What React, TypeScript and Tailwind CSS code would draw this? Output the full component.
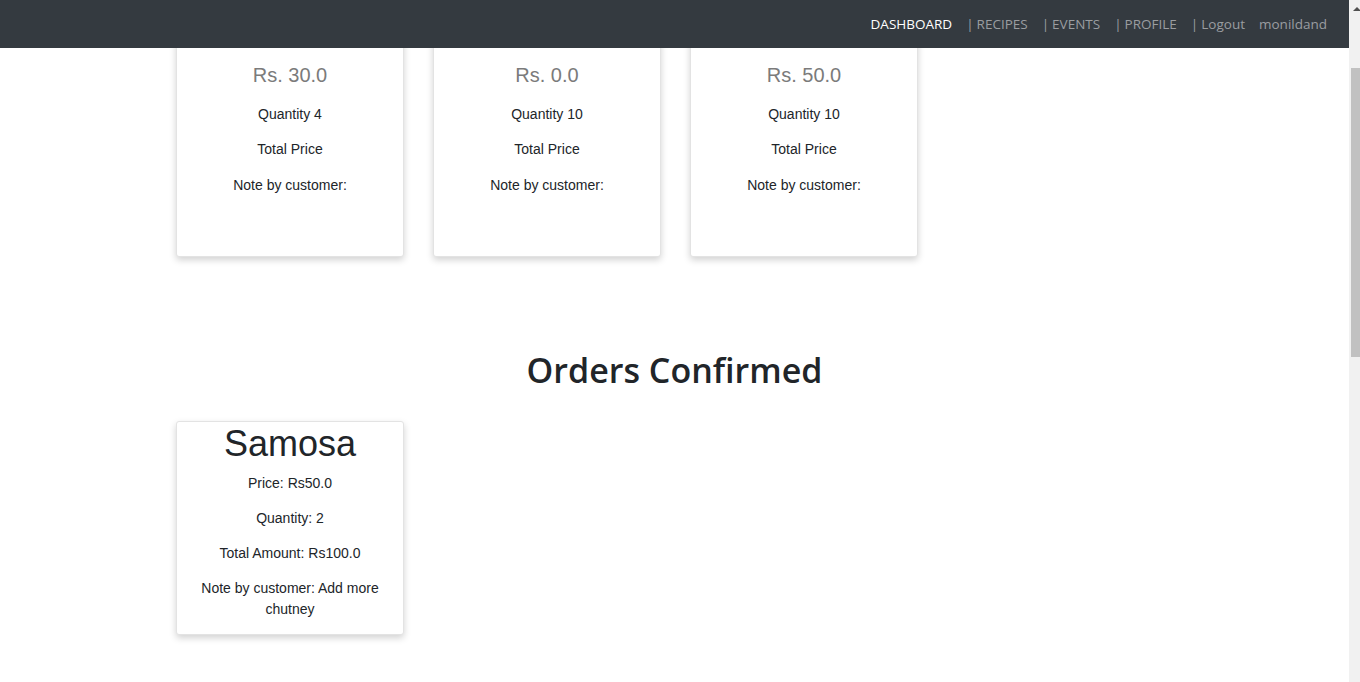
import React from 'react'

interface PendingOrder {
  id: number
  price: string
  quantity: number
}

const pending: PendingOrder[] = [
  { id: 1, price: 'Rs. 30.0', quantity: 4 },
  { id: 2, price: 'Rs. 0.0', quantity: 10 },
  { id: 3, price: 'Rs. 50.0', quantity: 10 },
]

const navLinks = ['RECIPES', 'EVENTS', 'PROFILE', 'Logout']

function Navbar() {
  return (
    <nav className="absolute top-0 left-0 right-0 z-10 h-[48px] bg-[#343a40] flex items-center justify-end pr-[15px] font-['Open_Sans',sans-serif] text-[13.5px]">
      <a className="px-[7px] text-white">DASHBOARD</a>
      {navLinks.map((l) => (
        <a key={l} className="px-[7px] text-[#9a9da0]">
          |<span className="ml-[3px]">{l}</span>
        </a>
      ))}
      <span className="px-[7px] text-[#9a9da0]">monildand</span>
    </nav>
  )
}

function PendingCard({ order }: { order: PendingOrder }) {
  return (
    <div className="w-[228px] pt-[62px] bg-white border border-[#e3e3e3] rounded-[3px] shadow-[0_3px_7px_rgba(0,0,0,0.18)] text-center">
      <h5 className="text-[20px] leading-[24px] mb-[17px] text-[#7b7b7b]">{order.price}</h5>
      <p className="leading-[21px] mb-[14px]">Quantity {order.quantity}</p>
      <p className="leading-[21px] mb-[15px]">Total Price</p>
      <p className="leading-[21px] mb-[14px]">Note by customer:</p>
      <div className="h-[46px]" />
    </div>
  )
}

function ConfirmedCard() {
  return (
    <div className="w-[228px] bg-white border border-[#e3e3e3] rounded-[3px] shadow-[0_3px_7px_rgba(0,0,0,0.18)] text-center">
      <h3 className="text-[36px] leading-[43px] mb-[8px] text-[#212529]">Samosa</h3>
      <p className="leading-[21px] mb-[14px]">Price: Rs50.0</p>
      <p className="leading-[21px] mb-[14px]">Quantity: 2</p>
      <p className="leading-[21px] mb-[14px]">Total Amount: Rs100.0</p>
      <p className="leading-[21px] mb-[14px] px-2">Note by customer: Add more chutney</p>
    </div>
  )
}

function Scrollbar() {
  return (
    <div className="w-[11px] h-full bg-[#f1f1f1] flex flex-col">
      <div className="h-[17px] flex items-center justify-start pl-[4px]">
        <div className="w-0 h-0 border-l-[4px] border-r-[4px] border-b-[4px] border-l-transparent border-r-transparent border-b-[#505050]" />
      </div>
      <div className="mt-[51px] ml-[2px] w-[9px] h-[289px] bg-[#c1c1c1]" />
    </div>
  )
}

export default function App() {
  return (
    <div className="flex w-[1360px] h-[682px] overflow-hidden bg-white">
      <div className="relative w-[1349px] h-full overflow-hidden">
        <Navbar />
        <div className="font-['Liberation_Sans',Arial,sans-serif] text-[14px] text-[#212529]">
          <div className="flex gap-[29px] pl-[176px]">
            {pending.map((o) => (
              <PendingCard key={o.id} order={o} />
            ))}
          </div>
          <h1 className="mt-[89px] mb-[27px] text-center font-['Open_Sans',sans-serif] font-semibold text-[34px] leading-[48px] text-[#212529]">
            Orders Confirmed
          </h1>
          <div className="flex gap-[29px] pl-[176px]">
            <ConfirmedCard />
          </div>
        </div>
      </div>
      <Scrollbar />
    </div>
  )
}
